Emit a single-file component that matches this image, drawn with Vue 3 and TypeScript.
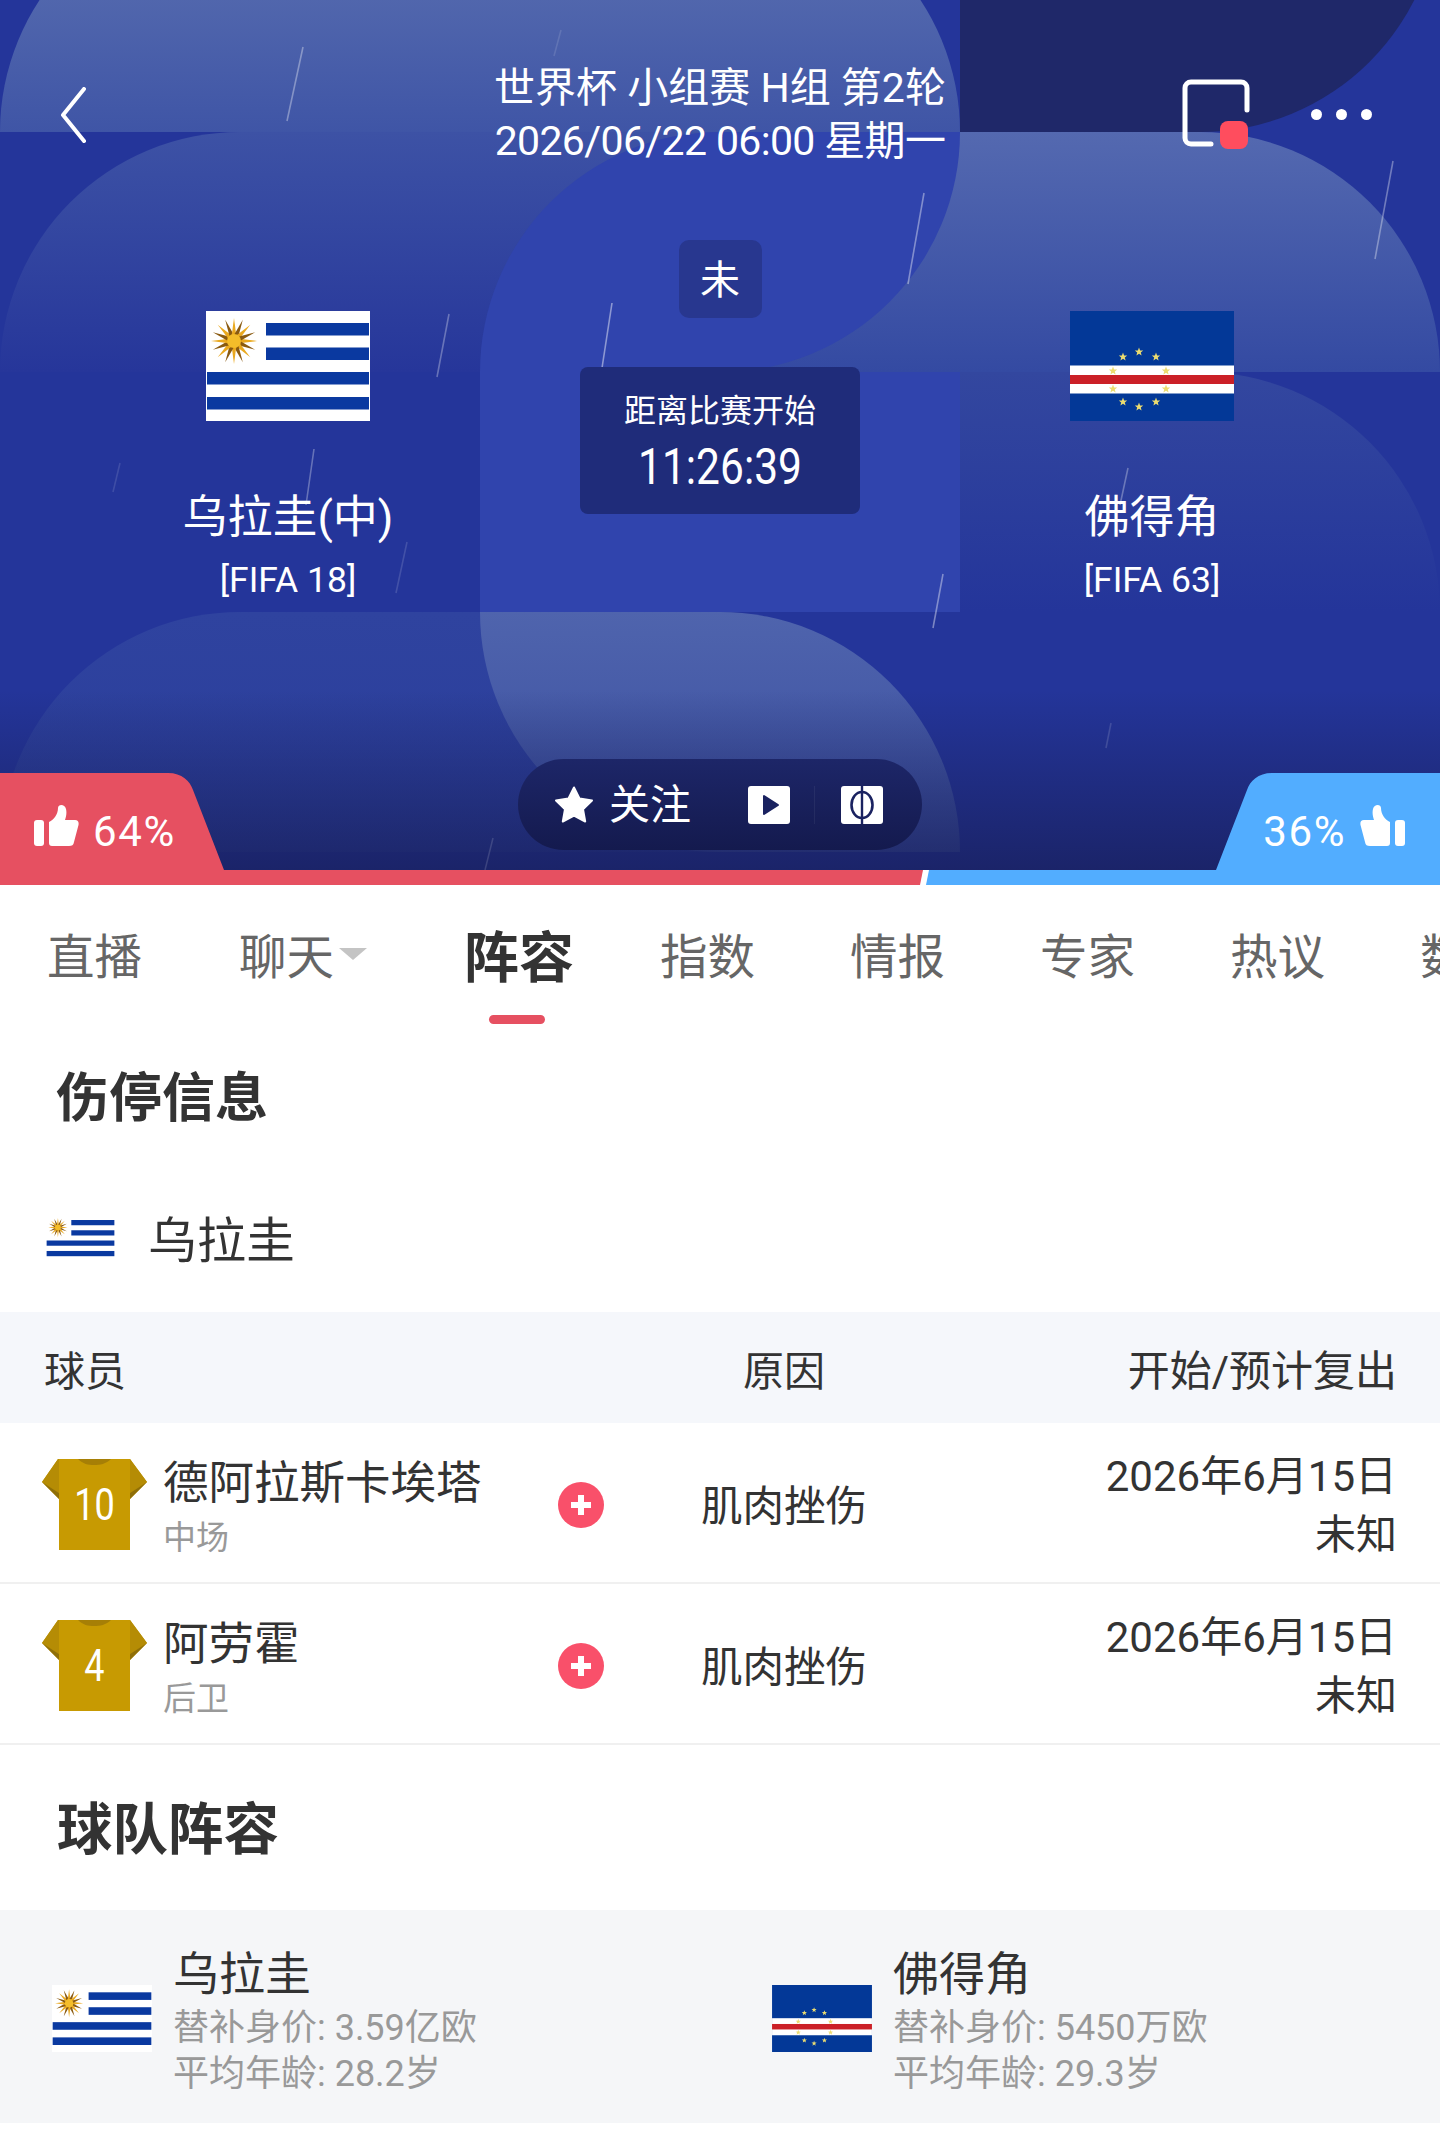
<template>
  <div class="page">
    <svg class="defs" width="0" height="0" aria-hidden="true">
      <defs>
        <symbol id="flag-uy" viewBox="0 0 164 110">
          <rect width="164" height="110" fill="#fff" />
          <rect x="60" y="12" width="103" height="12.5" fill="#0a39a0" />
          <rect x="60" y="36.5" width="103" height="12.5" fill="#0a39a0" />
          <rect x="1" y="61" width="162" height="12.5" fill="#0a39a0" />
          <rect x="1" y="86" width="162" height="12.5" fill="#0a39a0" />
          <polygon v-for="(r, i) in sunRays" :key="i" :points="r" :fill="i % 2 ? '#8a5a10' : '#eaa91f'" />
          <circle cx="28" cy="30" r="7" fill="#f4bd2a" />
        </symbol>
        <symbol id="flag-cv" viewBox="0 0 164 110">
          <rect width="164" height="110" fill="#033897" />
          <rect y="54.5" width="164" height="28" fill="#fff" />
          <rect y="64" width="164" height="9" fill="#cb2027" />
          <polygon v-for="(s, i) in cvStars" :key="i" :points="s" fill="#ecdc70" />
        </symbol>
        <symbol id="thumb" viewBox="0 0 45 41">
          <rect x="0" y="15" width="10" height="26" rx="3" fill="#fff" />
          <path
            d="M15 17C20 15 24 9 24 3C24-1 31-1 32 4C33 8 32 12 31 15H41C44 15 45 17 44.5 20L40 37C39.5 40 38 41 35 41H18C16 41 15 40 15 38Z"
            fill="#fff"
          />
        </symbol>
        <symbol id="shirt" viewBox="0 0 105 91">
          <path d="M16 0H88L105 23L88 40V91H17V40L0 23Z" fill="#c79a02" />
          <path d="M16 0L0 23L17 34V0Z" fill="#b58c05" />
          <path d="M88 0L105 23L88 34V0Z" fill="#b58c05" />
          <path d="M0 23L17 34V40Z" fill="#8f6f08" />
          <path d="M105 23L88 34V40Z" fill="#8f6f08" />
          <path d="M36 0H69C64 5 58 6 52 6C46 6 41 5 36 0Z" fill="#a67f06" />
        </symbol>
      </defs>
    </svg>

    <section class="hero">
      <svg class="hero-art" viewBox="0 0 1440 870" width="1440" height="870" aria-hidden="true">
        <defs>
          <linearGradient id="g-top" x1="0" y1="0" x2="0" y2="1">
            <stop offset="0" stop-color="#5f74b2" />
            <stop offset="1" stop-color="#3f55a6" />
          </linearGradient>
          <linearGradient id="g-left" x1="0" y1="0" x2="0" y2="1">
            <stop offset="0" stop-color="#3d52a5" />
            <stop offset="1" stop-color="#26369a" />
          </linearGradient>
          <linearGradient id="g-right" x1="0" y1="0" x2="0" y2="1">
            <stop offset="0" stop-color="#5469b0" />
            <stop offset="1" stop-color="#344aa2" />
          </linearGradient>
          <linearGradient id="g-tail" x1="0" y1="0" x2="0" y2="1">
            <stop offset="0" stop-color="#33479f" />
            <stop offset="1" stop-color="#24359a" />
          </linearGradient>
          <linearGradient id="g-foot" x1="0" y1="0" x2="0" y2="1">
            <stop offset="0" stop-color="#2f439f" />
            <stop offset="1" stop-color="#2a3d9b" />
          </linearGradient>
          <linearGradient id="g-leaf" x1="0" y1="0" x2="0" y2="1">
            <stop offset="0" stop-color="#4f64ad" />
            <stop offset="1" stop-color="#3a4ea0" />
          </linearGradient>
          <linearGradient id="g-fade" x1="0" y1="0" x2="0" y2="1">
            <stop offset="0" stop-color="#171d56" stop-opacity="0" />
            <stop offset="1" stop-color="#171d56" stop-opacity="0.72" />
          </linearGradient>
        </defs>
        <rect width="1440" height="870" fill="#24359a" />
        <!-- top band -->
        <path d="M0 132A240 240 0 0 1 240-108H720A240 240 0 0 1 960 132Z" fill="url(#g-top)" />
        <path d="M960-108H1440A240 240 0 0 1 1200 132H960Z" fill="#1f2869" />
        <!-- second band -->
        <path d="M0 372A240 240 0 0 1 240 132H720V372Z" fill="url(#g-left)" />
        <path d="M720 132H1200A240 240 0 0 1 1440 372H720Z" fill="url(#g-right)" />
        <path d="M480 372A240 240 0 0 1 720 132H960A240 240 0 0 1 720 372Z" fill="#3044ad" />
        <!-- third band -->
        <rect x="480" y="372" width="480" height="240" fill="#3044ad" />
        <path d="M960 372H1200A240 240 0 0 1 1440 612H960Z" fill="url(#g-tail)" />
        <!-- fourth band -->
        <path d="M0 852A240 240 0 0 1 240 612H720V852Z" fill="url(#g-foot)" />
        <path d="M480 612H720A240 240 0 0 1 960 852H720A240 240 0 0 1 480 612Z" fill="url(#g-leaf)" />
        <rect y="690" width="1440" height="180" fill="url(#g-fade)" />
        <line
          v-for="(l, i) in rain"
          :key="i"
          :x1="l[0]"
          :y1="l[1]"
          :x2="l[2]"
          :y2="l[3]"
          stroke="#fff"
          stroke-width="1.6"
          :stroke-opacity="l[4]"
        />
      </svg>

      <header class="topbar">
        <div class="topbar-side">
          <svg width="26" height="56" viewBox="0 0 26 56" fill="none">
            <path d="M24 2L3 28L24 54" stroke="#fff" stroke-width="4" stroke-linecap="round" stroke-linejoin="round" />
          </svg>
        </div>
        <div class="title">
          <div>世界杯 小组赛 H组 第2轮</div>
          <div class="title-date">2026/06/22 06:00 星期一</div>
        </div>
        <div class="topbar-side right">
          <svg class="rec" width="68" height="70" viewBox="0 0 68 70" fill="none">
            <path
              d="M29 65H9A6 6 0 0 1 3 59V9A6 6 0 0 1 9 3H59A6 6 0 0 1 65 9V31"
              stroke="#fff"
              stroke-width="5"
              stroke-linecap="round"
            />
            <rect x="38" y="42" width="28" height="28" rx="8" fill="#ff4d5e" />
          </svg>
          <div class="dots"><i></i><i></i><i></i></div>
        </div>
      </header>

      <div class="match">
        <div class="team">
          <svg class="team-flag"><use href="#flag-uy" /></svg>
          <div class="team-name">乌拉圭(中)</div>
          <div class="team-rank">[FIFA 18]</div>
        </div>
        <div class="center">
          <div class="status">未</div>
          <div class="countdown">
            <div class="countdown-label">距离比赛开始</div>
            <div class="countdown-time">11:26:39</div>
          </div>
        </div>
        <div class="team">
          <svg class="team-flag"><use href="#flag-cv" /></svg>
          <div class="team-name">佛得角</div>
          <div class="team-rank">[FIFA 63]</div>
        </div>
      </div>

      <div class="actions">
        <div class="follow">
          <svg width="40" height="38" viewBox="0 0 40 38">
            <path
              d="M20 1.5L25.6 12.6L38 14.5L29 23.2L31.2 35.5L20 29.6L8.8 35.5L11 23.2L2 14.5L14.4 12.6Z"
              fill="#fff"
              stroke="#fff"
              stroke-width="2"
              stroke-linejoin="round"
            />
          </svg>
          <span>关注</span>
        </div>
        <svg class="action-icon" width="42" height="38" viewBox="0 0 42 38">
          <rect width="42" height="38" rx="3" fill="#fff" />
          <path d="M16 10V28L30 19Z" fill="#1a2260" stroke="#1a2260" stroke-width="2" stroke-linejoin="round" />
        </svg>
        <i class="action-split"></i>
        <svg class="action-icon" width="42" height="38" viewBox="0 0 42 38">
          <rect width="42" height="38" rx="3" fill="#fff" />
          <ellipse cx="21" cy="19" rx="10.5" ry="13" fill="none" stroke="#1a2260" stroke-width="2.6" />
          <line x1="21" y1="0" x2="21" y2="38" stroke="#1a2260" stroke-width="2.4" />
        </svg>
      </div>

      <div class="vote home">
        <svg class="vote-bg" width="224" height="97" viewBox="0 0 224 97">
          <path d="M0 0H168C182 0 190 8 193 17L224 97H0Z" fill="#e65061" />
        </svg>
        <svg class="thumb" width="45" height="41"><use href="#thumb" /></svg>
        <span class="vote-num">64%</span>
      </div>
      <div class="vote away">
        <svg class="vote-bg" width="224" height="97" viewBox="0 0 224 97">
          <path d="M0 0H168C182 0 190 8 193 17L224 97H0Z" fill="#52adff" />
        </svg>
        <span class="vote-num">36%</span>
        <svg class="thumb flip" width="45" height="41"><use href="#thumb" /></svg>
      </div>
    </section>

    <div class="ratio">
      <div class="ratio-home"></div>
      <div class="ratio-away"></div>
    </div>

    <nav class="tabs">
      <div v-for="t in tabs" :key="t.name" class="tab" :class="{ active: t.active, 'has-caret': t.caret }">
        {{ t.name }}
        <i v-if="t.caret" class="caret"></i>
      </div>
    </nav>

    <h2 class="section-title first">伤停信息</h2>
    <div class="team-row">
      <svg class="team-row-flag"><use href="#flag-uy" /></svg>
      <span>乌拉圭</span>
    </div>

    <div class="grid-row head">
      <div class="col-player">球员</div>
      <div class="col-reason">原因</div>
      <div class="col-date">开始/预计复出</div>
    </div>
    <div v-for="p in injuries" :key="p.name" class="grid-row player">
      <div class="col-player person">
        <div class="shirt">
          <svg width="105" height="91"><use href="#shirt" /></svg>
          <span>{{ p.num }}</span>
        </div>
        <div class="person-info">
          <div class="person-name">{{ p.name }}</div>
          <div class="person-pos">{{ p.pos }}</div>
        </div>
      </div>
      <svg class="plus" width="46" height="46" viewBox="0 0 46 46">
        <circle cx="23" cy="23" r="23" fill="#f9506a" />
        <path d="M23 13V33M13 23H33" stroke="#fff" stroke-width="6" />
      </svg>
      <div class="col-reason reason">{{ p.reason }}</div>
      <div class="col-date date">
        <div>{{ p.start }}</div>
        <div class="date-back">{{ p.back }}</div>
      </div>
    </div>

    <h2 class="section-title second">球队阵容</h2>
    <div class="squads">
      <div v-for="s in squads" :key="s.name" class="squad">
        <svg class="squad-flag"><use :href="s.flag" /></svg>
        <div class="squad-info">
          <div class="squad-name">{{ s.name }}</div>
          <div class="squad-meta">替补身价: {{ s.value }}</div>
          <div class="squad-meta">平均年龄: {{ s.age }}</div>
        </div>
      </div>
    </div>
  </div>
</template>

<script setup lang="ts">
type Streak = [number, number, number, number, number];

const star = (cx: number, cy: number, r: number): string => {
  const pts: string[] = [];
  for (let i = 0; i < 10; i++) {
    const a = (Math.PI / 5) * i - Math.PI / 2;
    const d = i % 2 ? r * 0.42 : r;
    pts.push(`${(cx + Math.cos(a) * d).toFixed(1)},${(cy + Math.sin(a) * d).toFixed(1)}`);
  }
  return pts.join(" ");
};

const cvStars = [
  [69, 41],
  [53, 46],
  [86, 46],
  [43, 60],
  [96, 60],
  [43, 78],
  [96, 78],
  [53, 91],
  [86, 91],
  [69, 96],
].map(([x, y]) => star(x, y, 4.4));

// the sun on the Uruguay flag: alternating straight rays round a disc
const sunRays = Array.from({ length: 16 }, (_, i) => {
  const a = (Math.PI / 8) * i;
  const w = 0.2;
  const tip = 23;
  const base = 6;
  return [
    `${(28 + Math.cos(a) * tip).toFixed(1)},${(30 + Math.sin(a) * tip).toFixed(1)}`,
    `${(28 + Math.cos(a + w * 2) * base).toFixed(1)},${(30 + Math.sin(a + w * 2) * base).toFixed(1)}`,
    `${(28 + Math.cos(a - w * 2) * base).toFixed(1)},${(30 + Math.sin(a - w * 2) * base).toFixed(1)}`,
  ].join(" ");
});

const rain: Streak[] = [
  [303, 47, 287, 121, 0.35],
  [561, 30, 554, 56, 0.12],
  [449, 314, 437, 377, 0.3],
  [612, 303, 596, 407, 0.45],
  [314, 449, 306, 505, 0.3],
  [120, 463, 113, 492, 0.12],
  [407, 542, 396, 593, 0.14],
  [493, 838, 485, 870, 0.14],
  [924, 193, 908, 284, 0.4],
  [1393, 161, 1375, 259, 0.35],
  [1128, 468, 1120, 505, 0.3],
  [943, 574, 933, 628, 0.4],
  [1111, 723, 1106, 748, 0.14],
];

const tabs = [
  { name: "直播" },
  { name: "聊天", caret: true },
  { name: "阵容", active: true },
  { name: "指数" },
  { name: "情报" },
  { name: "专家" },
  { name: "热议" },
  { name: "数据" },
];

const injuries = [
  { num: 10, name: "德阿拉斯卡埃塔", pos: "中场", reason: "肌肉挫伤", start: "2026年6月15日", back: "未知" },
  { num: 4, name: "阿劳霍", pos: "后卫", reason: "肌肉挫伤", start: "2026年6月15日", back: "未知" },
];

const squads = [
  { name: "乌拉圭", flag: "#flag-uy", value: "3.59亿欧", age: "28.2岁" },
  { name: "佛得角", flag: "#flag-cv", value: "5450万欧", age: "29.3岁" },
];
</script>

<style>
body {
  background: #fff;
}
</style>

<style scoped>
.page {
  width: 1440px;
  height: 2136px;
  overflow: hidden;
  background: #fff;
  color: #333;
  font-family: Roboto, "Noto Sans CJK SC", sans-serif;
}

.defs {
  position: absolute;
}

.hero {
  position: relative;
  height: 870px;
  display: flex;
  flex-direction: column;
  color: #fff;
  overflow: hidden;
}

.hero-art {
  position: absolute;
  inset: 0;
}

.topbar {
  position: relative;
  display: grid;
  grid-template-columns: 1fr auto 1fr;
  align-items: center;
  padding-top: 62px;
}

.topbar-side {
  display: flex;
  align-items: center;
  padding-left: 60px;
}

.topbar-side.right {
  justify-content: flex-end;
  padding: 0 68px 0 0;
}

.rec {
  margin: -2px 61px 0 0;
}

.dots {
  display: flex;
  gap: 14px;
  margin-top: -2px;
}

.dots i {
  width: 11px;
  height: 11px;
  border-radius: 50%;
  background: #fff;
}

.title {
  font-size: 41px;
  line-height: 53px;
  text-align: center;
}

.title-date {
  letter-spacing: -0.65px;
}

.match {
  position: relative;
  display: grid;
  grid-template-columns: 576px 288px 576px;
  margin-top: 72px;
}

.team {
  display: flex;
  flex-direction: column;
  align-items: center;
  padding-top: 71px;
}

.team-flag {
  width: 164px;
  height: 110px;
}

.team-name {
  margin-top: 67px;
  font-size: 45px;
  line-height: 60px;
}

.team-rank {
  margin-top: 10px;
  font-size: 35.5px;
  line-height: 44px;
}

.center {
  display: flex;
  flex-direction: column;
  align-items: center;
}

.status {
  width: 83px;
  height: 78px;
  border-radius: 10px;
  background: #28378f;
  font-size: 40px;
  line-height: 82px;
  text-align: center;
}

.countdown {
  width: 280px;
  height: 147px;
  margin-top: 49px;
  padding-top: 24px;
  border-radius: 8px;
  background: #1f2c7a;
  text-align: center;
  box-sizing: border-box;
}

.countdown-label {
  font-size: 32px;
  line-height: 40px;
}

.countdown-time {
  margin-top: 8px;
  font-size: 50px;
  line-height: 56px;
  transform: scaleX(0.85);
}

.actions {
  position: relative;
  display: flex;
  align-items: center;
  align-self: center;
  width: 404px;
  height: 91px;
  margin-top: auto;
  margin-bottom: 20px;
  padding-left: 36px;
  box-sizing: border-box;
  border-radius: 46px;
  background: linear-gradient(#1d2668, #141a4e);
}

.follow {
  display: flex;
  align-items: center;
  gap: 15px;
  font-size: 41px;
  line-height: 50px;
}

.action-icon {
  margin-left: 57px;
}

.action-split {
  width: 1px;
  height: 38px;
  margin: 0 -1px 0 24px;
  background: rgba(255, 255, 255, 0.06);
}

.action-split + .action-icon {
  margin-left: 27px;
}

.vote {
  position: absolute;
  bottom: 0;
  display: flex;
  align-items: center;
  gap: 14px;
  width: 224px;
  height: 97px;
  box-sizing: border-box;
  padding-top: 8px;
}

.vote.home {
  left: 0;
  padding-left: 34px;
}

.vote.away {
  right: 0;
  justify-content: flex-end;
  padding-right: 35px;
}

.vote-bg {
  position: absolute;
  top: 0;
  left: 0;
}

.away .vote-bg,
.flip {
  transform: scaleX(-1);
}

.thumb,
.vote-num {
  position: relative;
}

.vote-num {
  top: 6px;
  font-size: 42px;
  letter-spacing: 1.6px;
  line-height: 48px;
}

.ratio {
  display: flex;
  height: 15px;
}

.ratio-home {
  flex: 0 0 923px;
  background: #e65061;
  clip-path: polygon(0 0, 100% 0, calc(100% - 3px) 100%, 0 100%);
}

.ratio-away {
  flex: 1;
  margin-left: 3px;
  background: #52adff;
  clip-path: polygon(3px 0, 100% 0, 100% 100%, 0 100%);
}

.tabs {
  display: flex;
  height: 139px;
  padding: 44px 0 0 47px;
  box-sizing: border-box;
  gap: 95px;
  white-space: nowrap;
}

.tab {
  position: relative;
  display: flex;
  flex: none;
  height: 58px;
  color: #666;
  font-size: 47.5px;
  line-height: 58px;
}

.tab.has-caret {
  margin-left: 2px;
}

.tab.active {
  margin: 0 -9px 0 2px;
  color: #333;
  font-size: 55px;
  font-weight: 700;
}

.tab.active::after {
  content: "";
  position: absolute;
  left: 25px;
  right: 29px;
  top: 86px;
  height: 9px;
  border-radius: 5px;
  background: #e65061;
}

.caret {
  width: 0;
  height: 0;
  margin: 19px 0 0 5px;
  border-left: 14px solid transparent;
  border-right: 14px solid transparent;
  border-top: 12px solid #c4c4c4;
}

.section-title {
  margin: 0;
  padding-left: 56px;
  font-size: 53px;
  font-weight: 700;
  line-height: 72px;
}

.section-title.first {
  margin-top: 39px;
}

.section-title.second {
  margin-top: 50px;
  padding-left: 57px;
  font-size: 55.5px;
}

.team-row {
  display: flex;
  align-items: center;
  gap: 33px;
  height: 60px;
  margin-top: 73px;
  padding-left: 46px;
  font-size: 49px;
  line-height: 60px;
}

.team-row > span {
  position: relative;
  top: 4px;
}

.team-row-flag {
  width: 69px;
  height: 46px;
}

.grid-row {
  display: grid;
  grid-template-columns: 516px 46px 360px 1fr;
  align-items: center;
  padding: 0 43px 0 42px;
}

.grid-row.head {
  height: 111px;
  margin-top: 44px;
  background: #f5f7fb;
  font-size: 41px;
}

.head .col-player {
  grid-column: 1 / span 2;
  padding-left: 2px;
}

.head .col-date {
  font-size: 42px;
}

.col-reason {
  text-align: center;
}

.col-date {
  text-align: right;
}

.grid-row.player {
  height: 161px;
  box-sizing: border-box;
  padding-top: 4px;
  border-bottom: 2px solid #f0f0f0;
}

.person {
  display: flex;
  align-items: center;
  gap: 16px;
}

.shirt {
  position: relative;
  width: 105px;
  height: 91px;
}

.shirt svg {
  display: block;
}

.shirt span {
  position: absolute;
  inset: 0;
  color: #fff;
  font-size: 44px;
  line-height: 93px;
  text-align: center;
  transform: scaleX(0.82);
}

.person-info {
  padding-top: 6px;
}

.person-name {
  font-size: 45.5px;
  line-height: 56px;
}

.person-pos {
  margin-top: 4px;
  color: #999;
  font-size: 33px;
  line-height: 44px;
}

.reason {
  margin-top: -3px;
  font-size: 41.5px;
}

.date {
  padding-top: 2px;
  font-size: 42px;
  line-height: 58px;
}

.date-back {
  font-size: 41px;
}

.squads {
  display: grid;
  grid-template-columns: 720px 720px;
  height: 213px;
  margin-top: 43px;
  background: #f5f6f8;
}

.squad {
  display: flex;
  align-items: center;
  gap: 21px;
  padding-left: 52px;
}

.squad-flag {
  width: 100px;
  height: 67px;
  margin-top: 4px;
}

.squad-info {
  padding-top: 7px;
}

.squad-name {
  margin-bottom: 1px;
  font-size: 46px;
  line-height: 60px;
}

.squad-meta {
  color: #999;
  font-size: 36px;
  line-height: 46px;
}
</style>
